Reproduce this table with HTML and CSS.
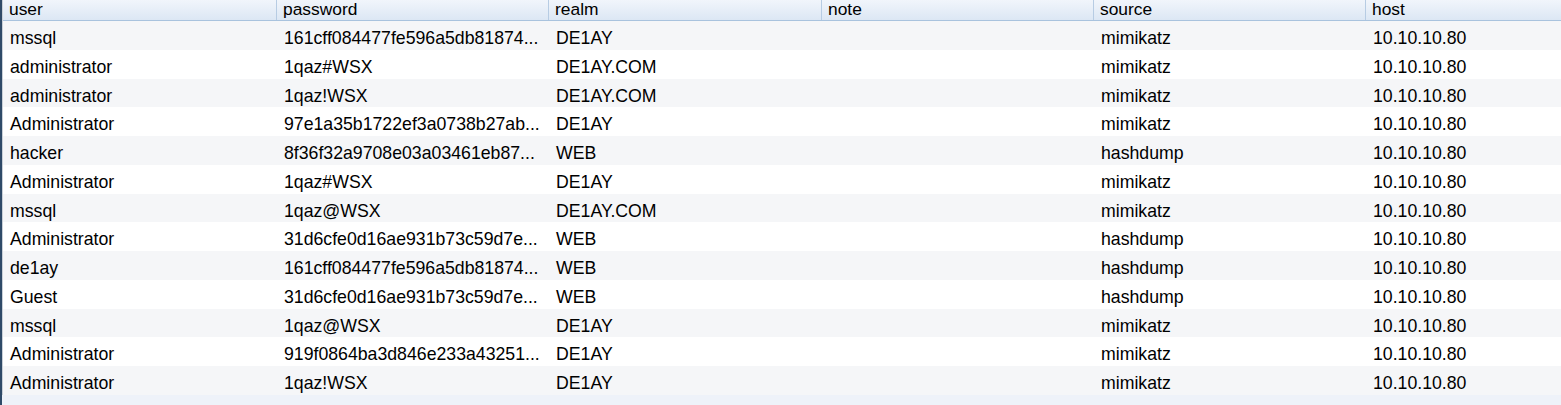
FILE: index.html
```html
<!DOCTYPE html>
<html>
<head>
<meta charset="utf-8">
<link rel="stylesheet" href="styles.css">
</head>
<body>
<div class="frame">
  <div class="table">
    <div class="head">
      <div class="hc">user</div>
      <div class="hc">password</div>
      <div class="hc">realm</div>
      <div class="hc">note</div>
      <div class="hc">source</div>
      <div class="hc last">host</div>
    </div>
    <div class="row alt"><div class="c">mssql</div><div class="c">161cff084477fe596a5db81874...</div><div class="c">DE1AY</div><div class="c"></div><div class="c">mimikatz</div><div class="c">10.10.10.80</div></div>
    <div class="row"><div class="c">administrator</div><div class="c">1qaz#WSX</div><div class="c">DE1AY.COM</div><div class="c"></div><div class="c">mimikatz</div><div class="c">10.10.10.80</div></div>
    <div class="row alt"><div class="c">administrator</div><div class="c">1qaz!WSX</div><div class="c">DE1AY.COM</div><div class="c"></div><div class="c">mimikatz</div><div class="c">10.10.10.80</div></div>
    <div class="row"><div class="c">Administrator</div><div class="c">97e1a35b1722ef3a0738b27ab...</div><div class="c">DE1AY</div><div class="c"></div><div class="c">mimikatz</div><div class="c">10.10.10.80</div></div>
    <div class="row alt"><div class="c">hacker</div><div class="c">8f36f32a9708e03a03461eb87...</div><div class="c">WEB</div><div class="c"></div><div class="c">hashdump</div><div class="c">10.10.10.80</div></div>
    <div class="row"><div class="c">Administrator</div><div class="c">1qaz#WSX</div><div class="c">DE1AY</div><div class="c"></div><div class="c">mimikatz</div><div class="c">10.10.10.80</div></div>
    <div class="row alt"><div class="c">mssql</div><div class="c">1qaz@WSX</div><div class="c">DE1AY.COM</div><div class="c"></div><div class="c">mimikatz</div><div class="c">10.10.10.80</div></div>
    <div class="row"><div class="c">Administrator</div><div class="c">31d6cfe0d16ae931b73c59d7e...</div><div class="c">WEB</div><div class="c"></div><div class="c">hashdump</div><div class="c">10.10.10.80</div></div>
    <div class="row alt"><div class="c">de1ay</div><div class="c">161cff084477fe596a5db81874...</div><div class="c">WEB</div><div class="c"></div><div class="c">hashdump</div><div class="c">10.10.10.80</div></div>
    <div class="row"><div class="c">Guest</div><div class="c">31d6cfe0d16ae931b73c59d7e...</div><div class="c">WEB</div><div class="c"></div><div class="c">hashdump</div><div class="c">10.10.10.80</div></div>
    <div class="row alt"><div class="c">mssql</div><div class="c">1qaz@WSX</div><div class="c">DE1AY</div><div class="c"></div><div class="c">mimikatz</div><div class="c">10.10.10.80</div></div>
    <div class="row"><div class="c">Administrator</div><div class="c">919f0864ba3d846e233a43251...</div><div class="c">DE1AY</div><div class="c"></div><div class="c">mimikatz</div><div class="c">10.10.10.80</div></div>
    <div class="row alt"><div class="c">Administrator</div><div class="c">1qaz!WSX</div><div class="c">DE1AY</div><div class="c"></div><div class="c">mimikatz</div><div class="c">10.10.10.80</div></div>
  </div>
</div>
</body>
</html>
```
FILE: styles.css
```css
html, body {
  margin: 0;
  padding: 0;
  background: #eef2f9;
}
.frame {
  height: 405px;
  overflow: hidden;
  border-left: 2px solid #2f4a68;
  background: #eef2f9;
  font-family: "Liberation Sans", Arial, sans-serif;
  font-size: 17.7px;
  color: #000;
}
.table {
  border-left: 1px solid #c9d0d8;
}
.head, .row {
  display: grid;
  grid-template-columns: 274px 272px 273px 272px 272px 1fr;
}
.head {
  height: 20px;
  border-bottom: 1px solid #a9c3de;
  background: linear-gradient(#f1f5fb, #dce7f4);
}
.hc {
  height: 20px;
  font-size: 17.4px;
  line-height: 19px;
  padding-left: 6px;
  border-right: 1px solid #b7cce3;
  white-space: nowrap;
}
.hc.last {
  border-right: none;
}
.row {
  height: 28.77px;
  background: #ffffff;
}
.row.alt {
  background: #f5f6f8;
}
.c {
  padding-top: 6px;
  line-height: 22.77px;
  padding-left: 7px;
  white-space: nowrap;
  overflow: hidden;
}
```
